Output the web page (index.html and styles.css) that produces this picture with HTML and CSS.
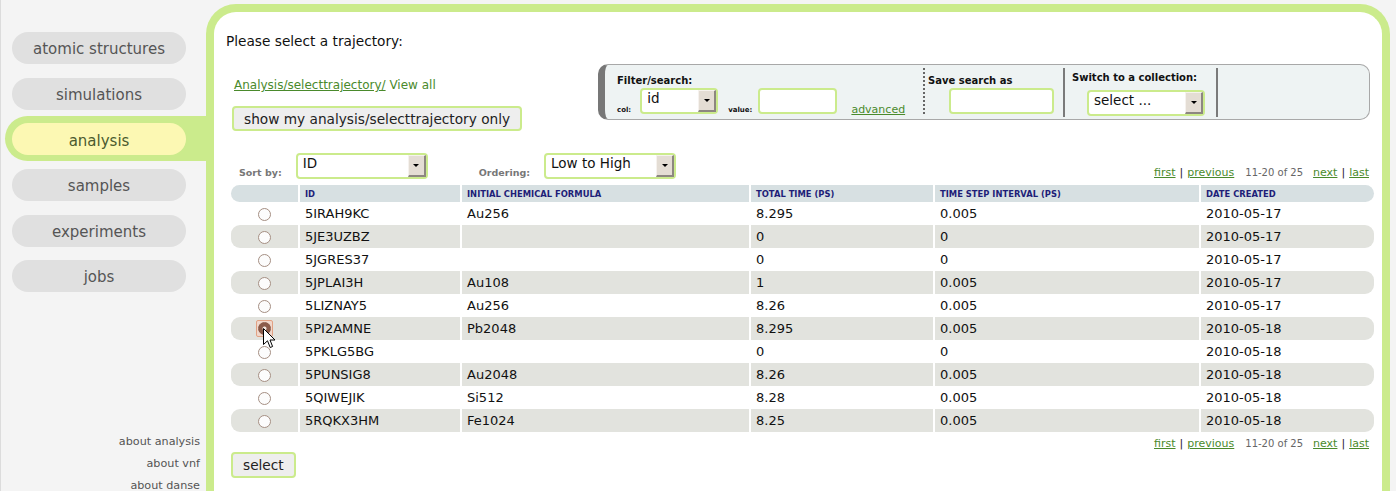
FILE: index.html
```html
<!DOCTYPE html>
<html>
<head>
<meta charset="utf-8">
<title>analysis - select trajectory</title>
<link rel="stylesheet" href="styles.css">
</head>
<body>
<div class="page">
  <aside class="sidebar">
    <nav class="nav">
      <a class="pill">atomic structures</a>
      <a class="pill">simulations</a>
      <div class="tab-active"><a class="pill pill-active">analysis</a></div>
      <a class="pill">samples</a>
      <a class="pill">experiments</a>
      <a class="pill">jobs</a>
    </nav>
    <div class="about">
      <a>about analysis</a>
      <a>about vnf</a>
      <a>about danse</a>
    </div>
  </aside>

  <main class="panel">
    <h1 class="title">Please select a trajectory:</h1>
    <div class="content">
      <div class="toolbar">
        <div class="toolbar-left">
          <div class="crumbs"><a class="link">Analysis/selecttrajectory/</a> <span class="viewall">View all</span></div>
          <button class="btn btn-wide">show my analysis/selecttrajectory only</button>
        </div>
        <div class="filterbox">
          <div class="fsec fsec-filter">
            <div class="flabel">Filter/search:</div>
            <div class="frow">
              <span class="tiny">col:</span>
              <div class="select sel-col"><span class="select-text">id</span><span class="select-btn"><i class="tri"></i></span></div>
              <span class="tiny tiny-value">value:</span>
              <div class="input in-value"></div>
              <a class="link adv">advanced</a>
            </div>
          </div>
          <div class="sep sep-dotted"></div>
          <div class="fsec fsec-save">
            <div class="flabel">Save search as</div>
            <div class="input in-save"></div>
          </div>
          <div class="sep"></div>
          <div class="fsec fsec-switch">
            <div class="flabel">Switch to a collection:</div>
            <div class="select sel-switch"><span class="select-text">select ...</span><span class="select-btn"><i class="tri"></i></span></div>
          </div>
          <div class="sep"></div>
        </div>
      </div>

      <div class="sortbar">
        <span class="slabel">Sort by:</span>
        <div class="select sel-sort"><span class="select-text">ID</span><span class="select-btn"><i class="tri"></i></span></div>
        <span class="slabel slabel-order">Ordering:</span>
        <div class="select sel-sort"><span class="select-text">Low to High</span><span class="select-btn"><i class="tri"></i></span></div>
        <div class="pager pager-top">
          <a class="link">first</a><span class="bar">|</span><a class="link">previous</a><span class="count">11-20 of 25</span><a class="link">next</a><span class="bar">|</span><a class="link">last</a>
        </div>
      </div>

      <table class="grid">
        <colgroup>
          <col class="c-radio"><col class="c-id"><col class="c-formula"><col class="c-total"><col class="c-step"><col class="c-date">
        </colgroup>
        <thead>
          <tr><th></th><th>ID</th><th>Initial chemical formula</th><th>Total time (ps)</th><th>Time step interval (ps)</th><th>Date created</th></tr>
        </thead>
        <tbody>
          <tr><td><span class="radio"></span></td><td>5IRAH9KC</td><td>Au256</td><td>8.295</td><td>0.005</td><td>2010-05-17</td></tr>
          <tr><td><span class="radio"></span></td><td>5JE3UZBZ</td><td></td><td>0</td><td>0</td><td>2010-05-17</td></tr>
          <tr><td><span class="radio"></span></td><td>5JGRES37</td><td></td><td>0</td><td>0</td><td>2010-05-17</td></tr>
          <tr><td><span class="radio"></span></td><td>5JPLAI3H</td><td>Au108</td><td>1</td><td>0.005</td><td>2010-05-17</td></tr>
          <tr><td><span class="radio"></span></td><td>5LIZNAY5</td><td>Au256</td><td>8.26</td><td>0.005</td><td>2010-05-17</td></tr>
          <tr><td class="cursor-cell"><span class="radio-focus"><span class="radio radio-on"></span></span>
            <svg class="cursor" width="13" height="21" viewBox="0 0 13 21"><path d="M0.5 0.5 L0.5 16.5 L4.5 12.8 L7.2 19.5 L9.6 18.5 L7 12 L12 12 Z" fill="#fff" stroke="#000" stroke-width="1" stroke-linejoin="round"/></svg>
          </td><td>5PI2AMNE</td><td>Pb2048</td><td>8.295</td><td>0.005</td><td>2010-05-18</td></tr>
          <tr><td><span class="radio"></span></td><td>5PKLG5BG</td><td></td><td>0</td><td>0</td><td>2010-05-18</td></tr>
          <tr><td><span class="radio"></span></td><td>5PUNSIG8</td><td>Au2048</td><td>8.26</td><td>0.005</td><td>2010-05-18</td></tr>
          <tr><td><span class="radio"></span></td><td>5QIWEJIK</td><td>Si512</td><td>8.28</td><td>0.005</td><td>2010-05-18</td></tr>
          <tr><td><span class="radio"></span></td><td>5RQKX3HM</td><td>Fe1024</td><td>8.25</td><td>0.005</td><td>2010-05-18</td></tr>
        </tbody>
      </table>

      <div class="pager pager-bottom">
        <a class="link">first</a><span class="bar">|</span><a class="link">previous</a><span class="count">11-20 of 25</span><a class="link">next</a><span class="bar">|</span><a class="link">last</a>
      </div>

      <button class="btn btn-select">select</button>
    </div>
  </main>
</div>
</body>
</html>
```
FILE: styles.css
```css
html, body {
  margin: 0;
  padding: 0;
  overflow: hidden;
  background: #f4f4f4;
}
body {
  font-family: "DejaVu Sans", Verdana, sans-serif;
  color: #111;
}
a { cursor: pointer; }

.page {
  display: flex;
  align-items: flex-start;
  width: 1396px;
  height: 491px;
  border-left: 1px solid #dcdcdc;
  box-sizing: border-box;
}

/* ---------- sidebar ---------- */
.sidebar {
  width: 205px;
  flex: none;
  padding-top: 32px;
}
.nav {
  display: flex;
  flex-direction: column;
  gap: 13.7px;
  padding-left: 11px;
}
.pill {
  display: block;
  box-sizing: border-box;
  width: 174px;
  height: 32px;
  padding-top: 2px;
  line-height: 30px;
  border-radius: 16px;
  background: #e0e0e0;
  color: #555;
  font-size: 15px;
  text-align: center;
}
.tab-active {
  width: 174px;
  margin: -7px 0 -6px -7px;
  padding: 7px 20px 6px 7px;
  background: #cbeb8c;
  border-radius: 23px 0 0 23px;
}
.pill-active {
  background: #fcf8b3;
  color: #4b5b2f;
  padding-top: 3px;
}
.about {
  margin-top: 139px;
  padding-right: 6px;
  display: flex;
  flex-direction: column;
  align-items: flex-end;
}
.about a {
  font-size: 11.2px;
  line-height: 22px;
  color: #555;
}

/* ---------- main panel ---------- */
.panel {
  width: 1184px;
  flex: none;
  box-sizing: border-box;
  margin-top: 4px;
  height: 520px;
  background: #fff;
  border: 8px solid #cbeb8c;
  border-bottom: none;
  border-radius: 30px 30px 0 0;
  padding: 0 8px 0 12px;
}
.title {
  margin: 21px 0 0 0;
  font-size: 13.7px;
  line-height: 16px;
  font-weight: normal;
  color: #111;
}
.content {
  padding-left: 5px;
}

.link {
  color: #4a8a2c;
  text-decoration: underline;
}

/* toolbar */
.toolbar {
  display: flex;
  margin-top: 15px;
}
.toolbar-left {
  padding-top: 14px;
}
.crumbs {
  padding-left: 3px;
  font-size: 12px;
  line-height: 15px;
}
.viewall { color: #4a8a2c; }
.btn {
  display: block;
  box-sizing: border-box;
  height: 25px;
  padding: 0 10px;
  border: 2px solid #cbeb8c;
  border-radius: 4px;
  background: #eeeeee;
  color: #222;
  font-family: "DejaVu Sans", Verdana, sans-serif;
  font-size: 13.7px;
  line-height: 20px;
}
.btn-wide {
  margin: 13px 0 0 1px;
}

/* filter box */
.filterbox {
  margin-left: auto;
  margin-right: 4px;
  width: 772px;
  height: 56px;
  box-sizing: border-box;
  display: flex;
  background: #eef3f3;
  border: 1px solid #a8a8a8;
  border-left: 7px solid #777;
  border-radius: 10px;
}
.fsec {
  box-sizing: border-box;
  padding-top: 10px;
}
.flabel {
  font-size: 10px;
  font-weight: bold;
  line-height: 12px;
  color: #111;
}
.fsec-filter { width: 318px; padding-left: 12px; }
.fsec-save { width: 138px; padding-left: 3px; }
.fsec-switch { width: 151px; padding-left: 7px; padding-top: 7px; }
.frow {
  display: flex;
  align-items: flex-end;
  margin-top: 1px;
}
.tiny {
  font-size: 7px;
  font-weight: bold;
  line-height: 8px;
  margin-bottom: 0;
  color: #111;
}
.sel-col { margin-left: 9px; width: 78px; }
.tiny-value { margin-left: 10px; }
.in-value { margin-left: 6px; width: 79px; }
.adv {
  margin-left: 14px;
  margin-bottom: -2px;
  font-size: 11px;
  line-height: 13px;
}
.in-save { margin: 1px 0 0 21px; width: 105px; }
.sel-switch { margin: 6px 0 0 15px; width: 118px; height: 27px; }

.sep {
  width: 0;
  border-left: 2px solid #7a7a7a;
  margin: 3px 0 2px 0;
}
.sep-dotted {
  border-left: 2px dotted #666;
  margin-bottom: 5px;
}

/* form controls */
.input {
  box-sizing: border-box;
  height: 26px;
  border: 2px solid #cbeb8c;
  border-radius: 4px;
  background: #fff;
}
.select {
  box-sizing: border-box;
  height: 26px;
  display: flex;
  border: 2px solid #cbeb8c;
  border-radius: 4px;
  background: #fff;
}
.select-text {
  flex: 1;
  padding: 0 5px;
  font-size: 13.5px;
  line-height: 17px;
  color: #111;
  white-space: nowrap;
}
.select-btn {
  box-sizing: border-box;
  width: 18px;
  background: #e4ddd4;
  border-top: 1px solid #f6f2ee;
  border-left: 1px solid #f6f2ee;
  border-right: 2px solid #8d8781;
  border-bottom: 2px solid #8d8781;
  display: flex;
  align-items: center;
  justify-content: center;
}
.tri {
  width: 0;
  height: 0;
  border-left: 3px solid transparent;
  border-right: 3px solid transparent;
  border-top: 3px solid #000;
}

/* sort bar */
.sortbar {
  display: flex;
  align-items: flex-end;
  margin-top: 22px;
  height: 26px;
}
.slabel {
  font-size: 9.5px;
  font-weight: bold;
  line-height: 12px;
  color: #777;
  margin-left: 8px;
  margin-right: 14px;
}
.slabel-order { margin-left: 51px; }
.sel-sort { width: 132px; }

.pager {
  display: flex;
  align-items: baseline;
  font-size: 11px;
  line-height: 13px;
  color: #222;
}
.pager-top {
  margin-left: auto;
  margin-right: 5px;
}
.bar { margin: 0 4px; color: #222; }
.count {
  margin: 0 10px 0 11px;
  font-size: 10px;
  color: #666;
}
.pager-bottom {
  justify-content: flex-end;
  margin: 5px 5px 0 0;
}

/* table */
.grid {
  margin-top: 6px;
  width: 1143px;
  table-layout: fixed;
  border-collapse: separate;
  border-spacing: 0;
}
.c-radio { width: 67px; }
.c-id { width: 162px; }
.c-formula { width: 289px; }
.c-total { width: 184px; }
.c-step { width: 266px; }
.c-date { width: 175px; }

.grid th {
  height: 17px;
  padding: 0 5px;
  background: #d7e0e2;
  color: #1e1e78;
  font-size: 8.4px;
  font-weight: bold;
  text-transform: uppercase;
  text-align: left;
  vertical-align: middle;
}
.grid td {
  height: 23px;
  padding: 0 5px;
  font-size: 13px;
  color: #111;
  vertical-align: middle;
  white-space: nowrap;
}
.grid th + th,
.grid td + td {
  border-left: 2px solid #fff;
}
.grid th:first-child,
.grid td:first-child {
  border-radius: 9px 0 0 9px;
  text-align: center;
  padding: 0;
}
.grid th:last-child,
.grid td:last-child {
  border-radius: 0 9px 9px 0;
}
.grid tbody tr:nth-child(even) td {
  background: #e2e3de;
}

.radio {
  display: inline-block;
  width: 11px;
  height: 11px;
  border: 1px solid #a58f83;
  border-radius: 50%;
  background: #fcfcfc;
  vertical-align: middle;
}
.radio-focus {
  display: inline-block;
  padding: 1px;
  border: 1px solid #e2a183;
  border-radius: 2px;
  background: #f0d7cb;
  vertical-align: middle;
  line-height: 0;
}
.radio-on {
  border-color: #8a5a48;
  background: radial-gradient(circle, #f3e6de 0 1.6px, #8b5b4a 2.4px);
}
.cursor-cell {
  position: relative;
}
.cursor {
  position: absolute;
  left: 32px;
  top: 11px;
}

.btn-select {
  margin-top: 2px;
  height: 26px;
}
```
